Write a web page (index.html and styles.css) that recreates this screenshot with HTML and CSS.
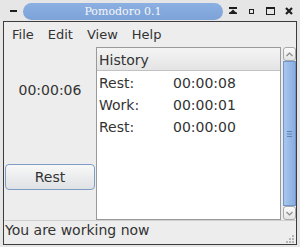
FILE: index.html
```html
<!DOCTYPE html>
<html lang="en">

<head>
    <meta charset="UTF-8">
    <title>Pomodoro 0.1</title>
    <link rel="stylesheet" href="styles.css">
</head>

<body>
    <div class="frame">
        <!-- Title bar -->
        <div class="titlebar">
            <span class="win-menu"></span>
            <div class="title">Pomodoro 0.1</div>
            <div class="controls">
                <svg class="ctl-shade" width="8" height="7" viewBox="0 0 8 7">
                    <rect x="0" y="0" width="8" height="2" fill="#1e1e1e"/>
                    <polygon points="4,2.5 7.5,6 0.5,6" fill="#1e1e1e"/>
                    <rect x="0" y="5.5" width="8" height="1.5" fill="#1e1e1e"/>
                </svg>
                <svg class="ctl-min" width="5" height="5" viewBox="0 0 5 5">
                    <rect x="0.5" y="0.5" width="4" height="4" fill="none" stroke="#1e1e1e"/>
                </svg>
                <svg class="ctl-max" width="9" height="8" viewBox="0 0 9 8">
                    <rect x="0.5" y="1" width="8" height="6.5" fill="none" stroke="#1e1e1e"/>
                    <rect x="0" y="0" width="9" height="2" fill="#1e1e1e"/>
                </svg>
                <svg class="ctl-close" width="8" height="8" viewBox="0 0 8 8">
                    <path d="M1 1 L7 7 M7 1 L1 7" stroke="#1e1e1e" stroke-width="2.2"/>
                </svg>
            </div>
        </div>

        <!-- Client area -->
        <div class="client">
            <div class="menubar">
                <span>File</span>
                <span>Edit</span>
                <span>View</span>
                <span>Help</span>
            </div>

            <div class="content">
                <div class="timer-panel">
                    <div class="timer">00:00:06</div>
                    <button class="rest-btn">Rest</button>
                </div>

                <div class="history">
                    <div class="list">
                        <div class="list-head">History</div>
                        <div class="list-body">
                            <div class="row"><span>Rest:</span><span>00:00:08</span></div>
                            <div class="row"><span>Work:</span><span>00:00:01</span></div>
                            <div class="row"><span>Rest:</span><span>00:00:00</span></div>
                        </div>
                    </div>
                    <div class="scrollbar">
                        <div class="sb-btn">
                            <svg width="7" height="5" viewBox="0 0 7 5">
                                <path d="M0.5 4 L3.5 1 L6.5 4" fill="none" stroke="#8a8a8a" stroke-width="1.2"/>
                            </svg>
                        </div>
                        <div class="sb-thumb">
                            <svg width="5" height="6" viewBox="0 0 5 6">
                                <rect x="0" y="0" width="5" height="1" fill="#5f84b8"/>
                                <rect x="0" y="2.5" width="5" height="1" fill="#5f84b8"/>
                                <rect x="0" y="5" width="5" height="1" fill="#5f84b8"/>
                            </svg>
                        </div>
                        <div class="sb-btn">
                            <svg width="7" height="5" viewBox="0 0 7 5">
                                <path d="M0.5 1 L3.5 4 L6.5 1" fill="none" stroke="#8a8a8a" stroke-width="1.2"/>
                            </svg>
                        </div>
                    </div>
                </div>
            </div>

            <div class="statusbar">
                <span>You are working now</span>
                <svg class="grip" width="9" height="8" viewBox="0 0 9 8">
                    <rect x="7" y="0" width="2" height="2" fill="#b5b5b5"/>
                    <rect x="4" y="3" width="2" height="2" fill="#b5b5b5"/>
                    <rect x="7" y="3" width="2" height="2" fill="#b5b5b5"/>
                    <rect x="1" y="6" width="2" height="2" fill="#b5b5b5"/>
                    <rect x="4" y="6" width="2" height="2" fill="#b5b5b5"/>
                    <rect x="7" y="6" width="2" height="2" fill="#b5b5b5"/>
                </svg>
            </div>
        </div>
    </div>
</body>

</html>
```

FILE: styles.css
```css
/* Window frame */
body {
    margin: 0;
    padding: 0;
    font-family: 'DejaVu Sans', sans-serif;
    color: #333;
}

.frame {
    width: 300px;
    height: 247px;
    background-color: #e6e6e6;
    display: flex;
    flex-direction: column;
}

/* Title bar */
.titlebar {
    height: 21px;
    display: flex;
    align-items: center;
}

.win-menu {
    width: 7px;
    height: 2px;
    margin-left: 10px;
    background-color: #1e1e1e;
}

.title {
    width: 200px;
    height: 17px;
    margin-left: 6px;
    margin-top: 1px;
    border-radius: 9px;
    background: linear-gradient(#8cb0e2, #7ca2d8);
    color: #f6f6f6;
    font-family: 'DejaVu Serif', serif;
    font-size: 11px;
    line-height: 17px;
    text-align: center;
}

.controls {
    display: flex;
    align-items: center;
}

.ctl-shade {
    margin-left: 6px;
}

.ctl-min {
    margin-left: 12px;
    margin-top: 1px;
}

.ctl-max {
    margin-left: 12px;
}

.ctl-close {
    margin-left: 10px;
}

/* Client area */
.client {
    flex: 1;
    margin: 0 3px 2px 3px;
    border: 1px solid #3c3c3c;
    background-color: #ededed;
    display: flex;
    flex-direction: column;
}

.menubar {
    height: 23px;
    display: flex;
    align-items: center;
    gap: 14px;
    padding-left: 8px;
    padding-top: 2px;
    box-sizing: border-box;
    font-size: 13px;
}

.content {
    flex: 1;
    display: flex;
}

/* Left panel */
.timer-panel {
    width: 92px;
    display: flex;
    flex-direction: column;
}

.timer {
    margin-top: 37px;
    font-size: 14px;
    line-height: 16px;
    text-align: center;
}

.rest-btn {
    margin: 66px 1px 0 1px;
    height: 26px;
    border: 1px solid #7f9cc6;
    border-radius: 4px;
    background: linear-gradient(#f8f8f8, #dfe1e4);
    font-family: 'DejaVu Sans', sans-serif;
    font-size: 14px;
    color: #333;
    padding: 0;
}

/* History list */
.history {
    flex: 1;
    display: flex;
    padding-top: 2px;
}

.list {
    flex: 1;
    border: 1px solid #9a9a9a;
    background-color: #fff;
    font-size: 14px;
}

.list-head {
    height: 23px;
    padding-top: 2px;
    padding-left: 2px;
    box-sizing: border-box;
    line-height: 21px;
    border-bottom: 1px solid #c2c2c2;
    background: linear-gradient(#f4f4f4, #e4e4e4);
}

.list-body {
    padding-top: 1px;
}

.row {
    display: grid;
    grid-template-columns: 74px 1fr;
    padding-left: 2px;
    line-height: 22px;
}

/* Scrollbar */
.scrollbar {
    width: 13px;
    margin-left: 2px;
    display: flex;
    flex-direction: column;
}

.sb-btn {
    height: 14px;
    border: 1px solid #a8a8a8;
    border-radius: 3px;
    background: linear-gradient(#fbfbfb, #e4e4e4);
    box-sizing: border-box;
    display: flex;
    align-items: center;
    justify-content: center;
}

.sb-thumb {
    flex: 1;
    border: 1px solid #6f95cb;
    background: linear-gradient(to right, #a9c7ee, #88ade0);
    display: flex;
    align-items: center;
    justify-content: center;
}

/* Status bar */
.statusbar {
    height: 24px;
    border-top: 1px solid #cfcfcf;
    box-sizing: border-box;
    display: flex;
    padding-left: 1px;
    font-size: 14px;
    line-height: 18px;
}

.grip {
    margin-left: auto;
    margin-right: 2px;
    align-self: flex-end;
    margin-bottom: 1px;
}
```
